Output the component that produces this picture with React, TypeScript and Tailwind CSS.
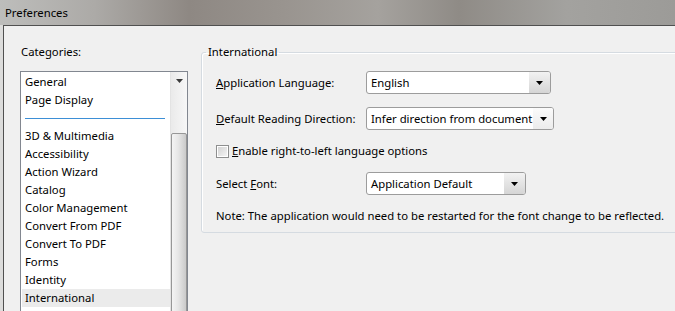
import React from "react";

const categories = [
  "3D & Multimedia",
  "Accessibility",
  "Action Wizard",
  "Catalog",
  "Color Management",
  "Convert From PDF",
  "Convert To PDF",
  "Forms",
  "Identity",
  "International",
];

const Arrow = ({ color = "#000" }: { color?: string }) => (
  <svg width="7" height="4" viewBox="0 0 7 4">
    <path d="M0 0h7L3.5 4z" fill={color} />
  </svg>
);

interface DropdownProps {
  value: string;
  width: string;
  light?: boolean;
}

const Dropdown = ({ value, width, light }: DropdownProps) => (
  <div
    className={`flex h-[23px] flex-none ${width} overflow-hidden rounded-[3px] border border-[#9c9c9c] bg-white`}
  >
    <div className="flex flex-1 items-center pl-[4px] whitespace-nowrap">{value}</div>
    <div
      className={
        light
          ? "flex w-[20px] flex-none items-center justify-center bg-gradient-to-b from-[#fbfbfb] to-[#ececec]"
          : "flex w-[21px] flex-none items-center justify-center bg-gradient-to-b from-[#f2f2f2] to-[#d5d5d5]"
      }
    >
      <Arrow />
    </div>
  </div>
);

const Row = ({ children }: { children: React.ReactNode }) => (
  <div className="flex h-[23px] items-center">{children}</div>
);

export default function App() {
  return (
    <div className="flex h-[311px] w-[675px] flex-col overflow-hidden bg-[#f0f0f0] font-['Noto_Sans',sans-serif] text-[11.3px] leading-[16px] text-black">
      {/* title bar */}
      <div className="flex h-[25px] flex-none items-center bg-[linear-gradient(90deg,#bdbdbb_0%,#acaaa7_14%,#8e8883_28%,#99948f_42%,#a5a29e_56%,#8f8b86_68%,#a3a29f_84%,#9c9b98_100%)] pl-[5px] pt-[1px]">
        Preferences
      </div>

      <div className="flex min-h-0 flex-1">
        <div className="w-[3px] flex-none bg-[#dcdcdb]" />
        <div className="flex min-w-0 flex-1 overflow-hidden border-t border-l border-[#505050]">
          {/* categories */}
          <div className="ml-[16px] flex w-[168px] flex-none flex-col pt-[18px]">
            <div className="pl-[1px]">Categories:</div>
            <div className="mt-[11px] flex h-[260px] flex-none border border-[#828790] bg-white">
              <div className="flex w-[149px] flex-col pt-[1px] pl-[1px]">
                <div className="flex h-[18px] items-center pl-[3px]">General</div>
                <div className="flex h-[18px] items-center pl-[3px]">Page Display</div>
                <div className="flex h-[18px] items-center px-[3px]">
                  <div className="h-px w-[140px] bg-[#3d8fd6]" />
                </div>
                {categories.map((c) => (
                  <div
                    key={c}
                    className={`flex h-[18px] items-center pl-[3px] ${
                      c === "International" ? "bg-[#ebebeb]" : ""
                    }`}
                  >
                    {c}
                  </div>
                ))}
              </div>
              <div className="flex w-[17px] flex-col border-l border-[#e3e3e3] bg-[linear-gradient(90deg,#eaeaea,#f7f7f7)]">
                <div className="flex h-[17px] items-center justify-center">
                  <Arrow color="#3a3a3a" />
                </div>
                <div className="h-[44px]" />
                <div className="flex-1 rounded-[2px] border border-[#979797] bg-[linear-gradient(90deg,#f4f4f4_0%,#e6e6e6_45%,#cacaca_100%)]" />
              </div>
            </div>
          </div>

          {/* international group */}
          <fieldset className="ml-[13px] mt-[18px] h-[189px] w-[480px] flex-none rounded-[3px] border border-[#d5dbe1] pl-[14px] shadow-[inset_1px_1px_0_#ffffff]">
            <legend className="-ml-[10px] px-[2px]">International</legend>
            <div className="mt-[11px] flex flex-col gap-[13px]">
              <Row>
                <div className="w-[150px] flex-none">
                  <span className="underline">A</span>pplication Language:
                </div>
                <Dropdown value="English" width="w-[185px]" />
              </Row>
              <Row>
                <div className="w-[150px] flex-none">
                  <span className="underline">D</span>efault Reading Direction:
                </div>
                <Dropdown value="Infer direction from document" width="w-[188px]" light />
              </Row>
              <div className="flex h-[16px] items-center">
                <div className="flex h-[13px] w-[13px] flex-none items-center justify-center border border-[#8e8f8f] bg-white">
                  <div className="h-[9px] w-[9px] bg-gradient-to-br from-[#d3d3d3] to-[#f4f4f4]" />
                </div>
                <div className="ml-[3px]">
                  <span className="underline">E</span>nable right-to-left language options
                </div>
              </div>
              <Row>
                <div className="w-[150px] flex-none">
                  Select <span className="underline">F</span>ont:
                </div>
                <Dropdown value="Application Default" width="w-[160px]" />
              </Row>
              <div className="whitespace-nowrap">
                Note: The application would need to be restarted for the font change to be reflected.
              </div>
            </div>
          </fieldset>
        </div>
      </div>
    </div>
  );
}
